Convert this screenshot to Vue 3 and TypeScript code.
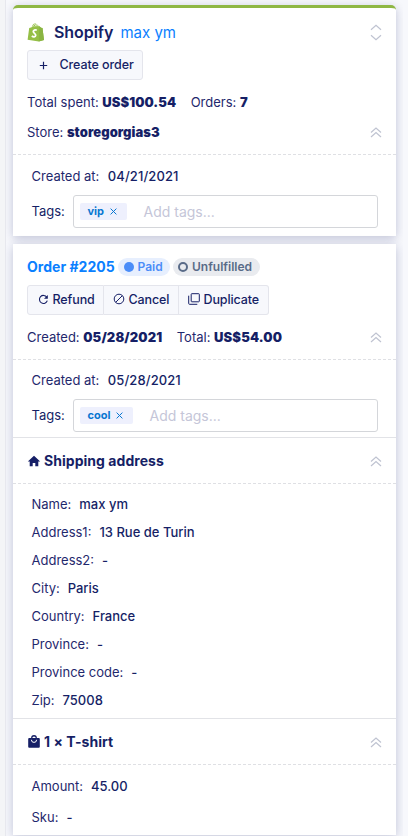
<script setup lang="ts">
interface Field {
  label: string
  value: string
}

const address: Field[] = [
  { label: 'Name:', value: 'max ym' },
  { label: 'Address1:', value: '13 Rue de Turin' },
  { label: 'Address2:', value: '-' },
  { label: 'City:', value: 'Paris' },
  { label: 'Country:', value: 'France' },
  { label: 'Province:', value: '-' },
  { label: 'Province code:', value: '-' },
  { label: 'Zip:', value: '75008' },
]
</script>

<template>
  <div class="page">
    <div class="rail"></div>
    <main class="panel">
      <section class="card customer">
        <header class="head">
          <svg class="bag" width="18" height="19" viewBox="0 0 18 19">
            <path d="M2.2 4.9 4.7 4.2C5.3 1.9 6.6.5 8 .5c.8 0 1.4.5 1.8 1.3.9-.1 1.5.5 1.8 1.4l1 .1 1.4 1.4 1.5.2L17 17 11.8 18.4.6 16.7Z" fill="#95bf47" />
            <path d="M12.3 3.2 14 4.7l1.5.2L17 17l-5.2 1.4Z" fill="#8ab543" />
            <path d="M5.7 4C6 2.6 7 1.4 8.1 1.3c.8.3 1 1.3 1 2.1M7.7 3.6c.3-1 1-1.5 2-1.8.5.4.7.8.8 1.4" fill="none" stroke="#fff" stroke-width=".6" />
            <path d="M9.8 7.3c-1.6-.9-3.5-.2-3.5 1.3 0 1.8 2.7 1.8 2.4 3.8-.3 1.8-2.3 1.8-3.9.6" fill="none" stroke="#fff" stroke-width="1.8" />
          </svg>
          <h1>Shopify</h1>
          <a class="name">max ym</a>
          <svg class="toggle" width="12" height="18" viewBox="0 0 12 18"><path d="m1 6.8 5-4.6 5 4.6M1 12.2l5 4.6 5-4.6" /></svg>
        </header>
        <button class="create">
          <svg width="9" height="9" viewBox="0 0 9 9"><path d="M4.5.8v7.4M.8 4.5h7.4" stroke="#161f66" stroke-width="1.2" /></svg>
          <span>Create order</span>
        </button>
        <div class="row summary totals">
          <span class="total">Total spent: <b>US$100.54</b></span>
          <span>Orders: <b>7</b></span>
        </div>
        <div class="row summary store">
          <span>Store: <b>storegorgias3</b></span>
          <svg class="toggle" width="12" height="12" viewBox="0 0 12 12"><path d="m1 6.5 5-4.5 5 4.5M1 11l5-4.5 5 4.5" /></svg>
        </div>
        <div class="dash"></div>
        <div class="fields">
          <div class="field created"><span>Created at:</span><strong>04/21/2021</strong></div>
          <div class="tags">
            <span>Tags:</span>
            <div class="input">
              <span class="tag vip"><b>vip</b><svg width="7" height="7" viewBox="0 0 7 7"><path d="m.6.6 5.8 5.8M6.4.6.6 6.4" /></svg></span>
              <span class="placeholder">Add tags...</span>
            </div>
          </div>
        </div>
      </section>

      <section class="card order">
        <header class="row order-head">
          <a class="number">Order #2205</a>
          <span class="badge paid"><i></i>Paid</span>
          <span class="badge unfulfilled"><i></i>Unfulfilled</span>
        </header>
        <div class="actions">
          <button>
            <svg width="11" height="11" viewBox="0 0 11 11"><path d="M8.8 3.2A4 4 0 1 0 9.3 6.6" fill="none" stroke="#161f66" stroke-width="1.1" /><path d="M9.8 1v3.8H6Z" fill="#161f66" /></svg>Refund
          </button>
          <button>
            <svg width="12" height="12" viewBox="0 0 12 12"><circle cx="6" cy="6" r="4.8" /><path d="m2.7 9.3 6.6-6.6" /></svg>Cancel
          </button>
          <button>
            <svg width="12" height="12" viewBox="0 0 12 12"><rect x="3.2" y=".7" width="8.1" height="8.1" rx=".6" /><path d="M.7 2.7v7.8q0 .8.8.8h7.8" /></svg>Duplicate
          </button>
        </div>
        <div class="row summary order-summary">
          <span class="total">Created: <b>05/28/2021</b></span>
          <span>Total: <b>US$54.00</b></span>
          <svg class="toggle" width="12" height="12" viewBox="0 0 12 12"><path d="m1 6.5 5-4.5 5 4.5M1 11l5-4.5 5 4.5" /></svg>
        </div>
        <div class="dash"></div>
        <div class="fields">
          <div class="field created"><span>Created at:</span><strong>05/28/2021</strong></div>
          <div class="tags">
            <span>Tags:</span>
            <div class="input">
              <span class="tag cool"><b>cool</b><svg width="7" height="7" viewBox="0 0 7 7"><path d="m.6.6 5.8 5.8M6.4.6.6 6.4" /></svg></span>
              <span class="placeholder">Add tags...</span>
            </div>
          </div>
        </div>
        <h2>
          <svg width="14" height="12" viewBox="0 0 14 12"><path d="M7 .8.8 6.4h1.9v4.9h3V8h2.6v3.3h3V6.4h1.9Z" fill="#161f66" /></svg>
          <span>Shipping address</span>
          <svg class="toggle" width="12" height="12" viewBox="0 0 12 12"><path d="m1 6.5 5-4.5 5 4.5M1 11l5-4.5 5 4.5" /></svg>
        </h2>
        <div class="dash"></div>
        <div class="fields address">
          <div v-for="f in address" :key="f.label" class="field"><span>{{ f.label }}</span><strong>{{ f.value }}</strong></div>
        </div>
        <h2>
          <svg width="14" height="14" viewBox="0 0 14 14"><path d="M2.2 3h1.9a2.9 2.9 0 0 1 5.8 0h1.9q1 0 1 1v7.7q0 1-1 1H2.2q-1 0-1-1V4q0-1 1-1Z" fill="#161f66" /><path d="M5.3 3.1a1.7 1.7 0 0 1 3.4 0Z" fill="#fff" /><path d="M4.4 4.8a2.6 2.6 0 0 0 5.2 0" fill="none" stroke="#fff" stroke-width="1" /></svg>
          <span>1 × T-shirt</span>
          <svg class="toggle" width="12" height="12" viewBox="0 0 12 12"><path d="m1 6.5 5-4.5 5 4.5M1 11l5-4.5 5 4.5" /></svg>
        </h2>
        <div class="dash"></div>
        <div class="fields item">
          <div class="field"><span>Amount:</span><strong>45.00</strong></div>
          <div class="field"><span>Sku:</span><strong>-</strong></div>
        </div>
      </section>
    </main>
  </div>
</template>

<style>
body { margin: 0; overflow: hidden; }
</style>

<style scoped>
* { box-sizing: border-box; }
.page {
  display: flex;
  width: 408px;
  height: 836px;
  overflow: hidden;
  background: #f7f8fc;
  color: #161f66;
  font: 400 13px/20px Inter, sans-serif;
}
.rail { width: 6px; background: #f4f5f7; border-right: 1px solid #e7e8ee; }
.panel {
  display: flex;
  flex-direction: column;
  gap: 8px;
  width: 397px;
  padding: 5px 7px 0;
  overflow: hidden;
}
.card {
  flex: none;
  width: 383px;
  background: #fff;
  box-shadow: 0 2px 10px rgba(22, 31, 102, .24);
}
.customer { height: 231px; border-top: 3px solid #8fb744; border-radius: 5px 5px 0 0; }
.order { height: 591px; }
.head { display: flex; align-items: center; height: 42px; padding: 6px 14px 0; }
.bag { margin-right: 9px; }
h1 { margin: 0; font-size: 16px; line-height: 20px; font-weight: 600; letter-spacing: -.05px; }
.name { margin-left: 7px; padding-top: 1px; color: #0a80ff; font-size: 15px; line-height: 20px; }
.toggle { margin-left: auto; fill: none; stroke: #bfc3d1; stroke-width: 1.2; }
button {
  display: flex;
  align-items: center;
  height: 30px;
  padding: 0;
  border: 1px solid #e4e5ec;
  background: #f7f8fc;
  color: #161f66;
  font: 500 12.5px/20px Inter, sans-serif;
}
.create { width: 116px; margin-left: 14px; padding-left: 11px; border-radius: 3px; }
.create span { margin-left: 11.5px; letter-spacing: -.08px; }
.row { display: flex; align-items: center; padding: 0 14px; }
.summary { color: #1f286d; }
.summary b { color: #161f66; font-weight: 900; letter-spacing: .06px; }
.total { margin-right: 14.5px; }
.order-summary b { letter-spacing: .12px; }
.totals { height: 30px; margin-top: 7px; }
.store { height: 30px; }
.dash { height: 1px; background: repeating-linear-gradient(90deg, #dfe0e4 0 3px, #fff 3px 5px); }
.store + .dash { margin-top: 7px; }
.fields { padding: 0 18px 0 18.5px; }
.field { display: flex; align-items: center; gap: 8px; height: 28px; }
.field span { color: #1f286d; }
.field strong { font-weight: 500; }
.created { margin-top: 7px; }
.created strong { margin-left: .5px; letter-spacing: .1px; }
.tags { display: flex; align-items: center; justify-content: space-between; height: 33px; margin-top: 5px; }
.tags > span { padding-bottom: 1px; }
.input {
  display: flex;
  align-items: center;
  width: 305px;
  height: 33px;
  padding: 0 0 1px 6px;
  border: 1px solid #d4d6da;
  border-radius: 3px;
}
.tag {
  display: flex;
  align-items: center;
  justify-content: space-between;
  height: 17px;
  padding: 0 10px 0 7.5px;
  border-radius: 2px;
  background: #eef0fd;
  color: #0877d1;
  font-size: 11px;
}
.tag svg { fill: none; stroke: #0877d1; stroke-width: 1; }
.vip { width: 47px; }
.cool { width: 53px; }
.placeholder { margin-left: 16.5px; padding-top: 1px; color: #c5c6d8; font-size: 14px; }
.order-head { height: 41px; padding-top: 5px; }
.number { width: 91px; color: #0a80ff; font-size: 14px; font-weight: 700; letter-spacing: .02px; white-space: nowrap; }
.badge {
  display: flex;
  align-items: center;
  height: 18px;
  padding-left: 6px;
  border-radius: 9px;
  font-size: 12px;
  font-weight: 600;
}
.badge i { width: 10px; height: 10px; margin-right: 3.5px; border-radius: 50%; }
.paid { width: 52px; background: #e7effe; color: #4b8df8; }
.paid i { background: #4b8df8; }
.unfulfilled { width: 87px; margin-left: 3px; padding-left: 5px; background: #e9ebef; color: #596b88; }
.unfulfilled i { margin-right: 4px; border: 2px solid #596b88; }
.actions { display: flex; padding-left: 14px; }
.actions button { padding-left: 9px; letter-spacing: -.1px; }
.actions svg { flex: none; margin: 0 3.5px 2px 0; fill: none; stroke: #161f66; stroke-width: 1; }
.actions button:nth-child(1) { width: 77px; border-radius: 3px 0 0 3px; padding-left: 10px; }
.actions button:nth-child(1) svg { stroke: none; }
.actions button:nth-child(2) { width: 75px; border-left: 0; }
.actions button:nth-child(3) { width: 90px; border-left: 0; border-radius: 0 3px 3px 0; }
.order-summary { height: 44px; }
.order .created { margin-top: 6px; }
h2 {
  display: flex;
  align-items: center;
  height: 46px;
  margin: 5px 0 0;
  padding: 1px 14px 0;
  border-top: 1px solid #e2e3e7;
  font-size: 14px;
  line-height: 20px;
  font-weight: 700;
}
h2 span { margin-left: 3px; letter-spacing: .04px; }
.address { padding-top: 6px; }
.address + h2 { margin-top: 4px; }
.item { padding-top: 7px; }
.item .field + .field { margin-top: 3px; }
</style>
